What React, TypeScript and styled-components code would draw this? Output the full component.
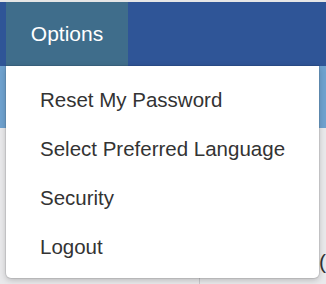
import React from "react";
import styled, { createGlobalStyle } from "styled-components";

const Global = createGlobalStyle`
  html, body { margin: 0; padding: 0; background: #e9e9eb; }
  body { font-family: "Liberation Sans", Arial, sans-serif; }
`;

const Page = styled.div`
  position: relative;
  width: 326px;
  height: 284px;
  overflow: hidden;
  display: flex;
  flex-direction: column;
  background: #e9e9eb;
`;

const TopStrip = styled.div`
  height: 2px;
  background: #e6e6e6;
`;

const Navbar = styled.nav`
  height: 64px;
  background: #2f5597;
  display: flex;
  padding-left: 6px;
`;

const Tab = styled.div<{ $active?: boolean }>`
  width: 122px;
  display: flex;
  align-items: center;
  justify-content: center;
  color: #ffffff;
  font-size: 21px;
  background: ${(p) => (p.$active ? "#3f6d8b" : "transparent")};
  padding-bottom: 1px;
  box-sizing: border-box;
`;

const SubBar = styled.div`
  height: 62px;
  background: #6fa2cf;
`;

const Content = styled.div`
  flex: 1;
  display: grid;
  grid-template-columns: 200px 1fr;
`;

const Column = styled.div<{ $divider?: boolean }>`
  border-right: ${(p) => (p.$divider ? "1px solid #c9c9cc" : "none")};
  position: relative;
`;

const Paren = styled.span`
  position: absolute;
  left: 119px;
  top: 122px;
  font-size: 21px;
  color: #333;
`;

const Dropdown = styled.ul`
  position: absolute;
  left: 6px;
  top: 66px;
  width: 313px;
  margin: 0;
  padding: 9px 0 7px;
  list-style: none;
  background: #ffffff;
  border-radius: 0 0 5px 5px;
  box-shadow: 0 2px 6px rgba(0, 0, 0, 0.22), 0 0 0 1px rgba(0, 0, 0, 0.08);
  box-sizing: border-box;
`;

const Item = styled.li`
  height: 49px;
  display: flex;
  align-items: center;
  padding-left: 34px;
  font-size: 20.5px;
  color: #333333;
`;

const items = [
  "Reset My Password",
  "Select Preferred Language",
  "Security",
  "Logout",
];

export default function App() {
  return (
    <>
      <Global />
      <Page>
        <TopStrip />
        <Navbar>
          <Tab $active>Options</Tab>
        </Navbar>
        <SubBar />
        <Content>
          <Column $divider />
          <Column>
            <Paren>(</Paren>
          </Column>
        </Content>
        <Dropdown>
          {items.map((t) => (
            <Item key={t}>{t}</Item>
          ))}
        </Dropdown>
      </Page>
    </>
  );
}
